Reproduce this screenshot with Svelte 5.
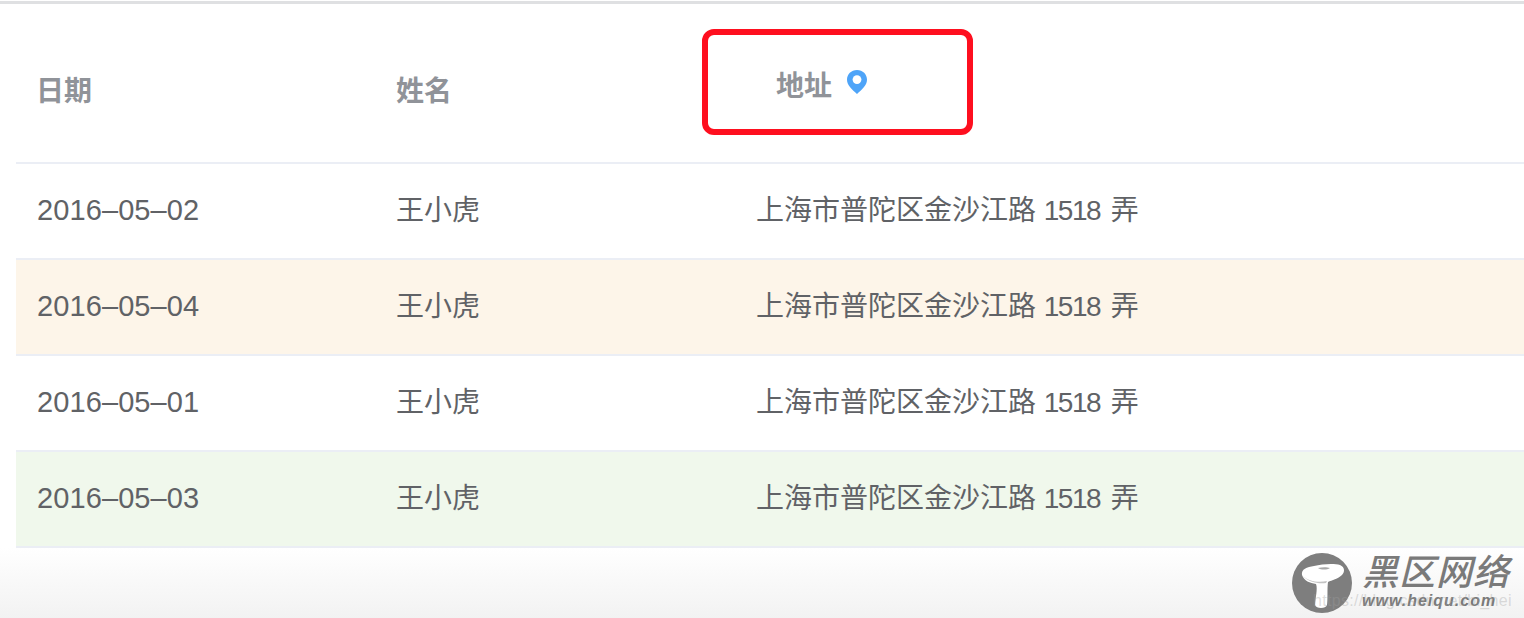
<script lang="ts">
  const rows = [
    { date: '2016–05–02', tone: '' },
    { date: '2016–05–04', tone: 'warning' },
    { date: '2016–05–01', tone: '' },
    { date: '2016–05–03', tone: 'success' }
  ];
</script>

<div class="page">
  <div class="table">
    <div class="row head">
      <div class="cell">日期</div>
      <div class="cell">姓名</div>
      <div class="cell addr-head">
        地址
        <svg class="pin" viewBox="0 0 22 26" width="22" height="26">
          <path d="M11 1C5.2 1 1 5.3 1 10.8c0 5.6 5.2 9.8 10 14.2 4.8-4.4 10-8.6 10-14.2C21 5.3 16.8 1 11 1z" fill="#4ea4f8" />
          <circle cx="11" cy="10.6" r="4.4" fill="#fff" />
        </svg>
      </div>
    </div>
    {#each rows as row}
      <div class="row {row.tone}">
        <div class="cell date">{row.date}</div>
        <div class="cell">王小虎</div>
        <div class="cell">上海市普陀区金沙江路 <span class="num">1518</span> 弄</div>
      </div>
    {/each}
  </div>

  <div class="highlight"></div>

  <div class="watermark">
    <svg class="logo" viewBox="0 0 60 60" width="60" height="60">
      <circle cx="30" cy="30" r="30" fill="#7e7e7e" />
      <path d="M10 22C9 16 15 14 22 13 30 11 42 10 48 12c5 2 5 7 2 10-4 4-10 5-14 7-1 7 0 17-1 23-1 4-11 4-12 0 0-6 3-16 1-21-6-1-12-3-14-9z" fill="#fff" />
      <path d="M11 23c5 5 15 7 24 5l-1 2c-8 1-18-1-23-7z" fill="#c4c4c4" />
      <path d="M26 15c4-1 9-1 12 0-3 2-9 2-12 0z" fill="#a8a8a8" />
    </svg>
    <div class="brand">
      <div class="brand-name">黑区网络</div>
      <div class="brand-url">www.heiqu.com</div>
    </div>
    <div class="csdn">https://blog.csdn.net/bi_hei</div>
  </div>
</div>

<style>
  :global(body) {
    margin: 0;
    background: #fff;
  }

  .page {
    position: relative;
    box-sizing: border-box;
    width: 1524px;
    height: 618px;
    overflow: hidden;
    padding: 5px 0 0 16px;
    background:
      linear-gradient(#dfe0e2, #dfe0e2) 0 1px / 100% 3px no-repeat,
      linear-gradient(#fff 548px, #f2f2f2 618px);
    font-family: "Liberation Sans", "Noto Sans CJK SC", sans-serif;
    font-size: 28px;
    color: #606266;
  }

  .row {
    display: grid;
    grid-template-columns: 360px 360px 1fr;
    align-items: center;
    height: 94px;
    background: #fff;
    border-bottom: 2px solid #ebeef5;
  }

  .row.head {
    height: 157px;
    font-weight: 700;
    color: #909399;
  }

  .row.warning {
    background: #fdf5e9;
  }

  .row.success {
    background: #f0f8ec;
  }

  .cell {
    padding: 0 0 6px 20px;
  }

  .cell.date {
    padding: 0 0 2px 21px;
    font-size: 29px;
    letter-spacing: 0.1px;
  }

  .num {
    letter-spacing: -1.5px;
    margin-right: 3px;
  }

  .row.head .cell {
    padding: 10px 0 0 20px;
  }

  .row.head .addr-head {
    display: flex;
    align-items: center;
    gap: 14px;
    padding: 0 0 0 40px;
  }

  .pin {
    flex: none;
    margin-bottom: 4px;
  }

  .highlight {
    position: absolute;
    left: 702px;
    top: 29px;
    width: 271px;
    height: 106px;
    box-sizing: border-box;
    border: 6px solid #fe0f1f;
    border-radius: 12px;
  }

  .watermark {
    position: absolute;
    left: 1292px;
    top: 553px;
    display: flex;
    gap: 10px;
    color: #7a7a7a;
  }

  .brand-name {
    font-size: 36px;
    line-height: 40px;
    font-weight: 500;
    font-style: italic;
    letter-spacing: 1px;
    white-space: nowrap;
  }

  .brand-url {
    font-size: 16px;
    line-height: 16px;
    font-weight: 700;
    font-style: italic;
    letter-spacing: 1px;
    white-space: nowrap;
  }

  .csdn {
    position: absolute;
    left: 21px;
    top: 39px;
    font-size: 16px;
    letter-spacing: 0.3px;
    color: rgba(160, 160, 160, 0.35);
    white-space: nowrap;
  }
</style>
